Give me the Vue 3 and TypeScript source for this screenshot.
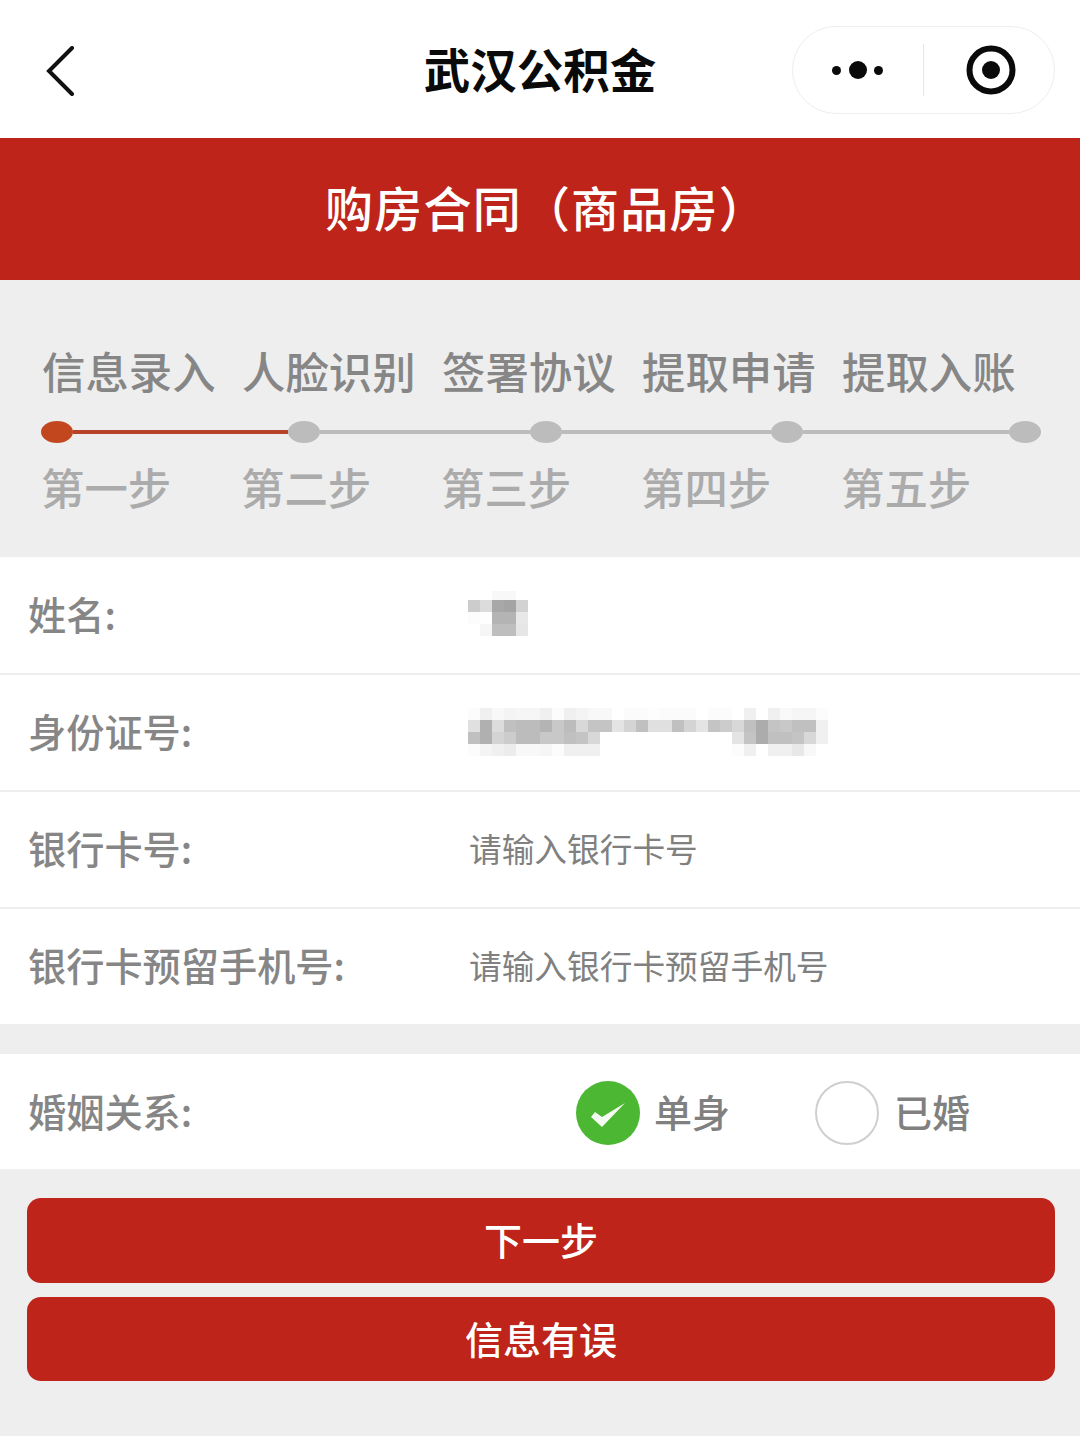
<script setup lang="ts">
const steps = [
  { name: '信息录入', no: '第一步' },
  { name: '人脸识别', no: '第二步' },
  { name: '签署协议', no: '第三步' },
  { name: '提取申请', no: '第四步' },
  { name: '提取入账', no: '第五步' },
];

// the gaps between the step dots are not quite even in the original
const segments = [215, 210, 209, 206];

// mosaic cells of the blurred-out values, grey level per 12px cell
const nameCells = [
  ['fff', 'fff', 'f8f8f8', 'f8f8f8', 'fff'],
  ['ccc', 'dcdcdc', 'a8a8a8', 'a4a4a4', 'd2d2d2'],
  ['fcfcfc', 'fefefe', 'b4b4b4', 'b4b4b4', 'e8e8e8'],
  ['fff', 'f6f6f6', 'bebebe', 'bebebe', 'e6e6e6'],
];
const idLevels = [
  'fc f0 f8 f4 f6 f6 f0 fc f0 f4 f8 f8 ff fb fb fd fb fb fb ff fb fb ff f0 ff f0 f9 f6 f6 fc',
  'e0 b0 dc c0 bc bc b4 c8 bc d8 c4 c4 e4 d4 c0 e0 e0 c0 d4 e4 c4 cc d8 c0 ac c4 c8 c0 c0 f0',
  'c0 b0 d4 cc bc bc c8 c8 c0 c4 d8 ff ff ff ff ff ff ff ff ff ff ff e4 c4 ac c0 c0 c4 d8 f0',
  'fc f4 f0 ec f8 f8 f6 fc f0 f0 f0 ff ff ff ff ff ff ff ff ff ff ff fc f0 ff f0 f0 e8 f8 ff',
];
const idCells = idLevels.map((row) => row.split(' ').map((v) => v + v + v));

const fields = [
  { label: '姓名:', cells: nameCells },
  { label: '身份证号:', cells: idCells },
  { label: '银行卡号:', placeholder: '请输入银行卡号' },
  { label: '银行卡预留手机号:', placeholder: '请输入银行卡预留手机号' },
];
</script>

<template>
  <div class="page">
    <nav class="nav">
      <svg class="back" width="30" height="50" viewBox="0 0 30 50">
        <path d="M26 2 L3 25 L26 48" fill="none" stroke="#111" stroke-width="4" stroke-linecap="round" stroke-linejoin="miter" />
      </svg>
      <h1 class="nav-title">武汉公积金</h1>
      <div class="capsule">
        <div class="dots"><i></i><i class="big"></i><i></i></div>
        <span class="sep"></span>
        <svg width="50" height="50" viewBox="0 0 50 50" class="target">
          <circle cx="25" cy="25" r="21.5" fill="none" stroke="#0a0a0a" stroke-width="6" />
          <circle cx="25" cy="25" r="9" fill="#0a0a0a" />
        </svg>
      </div>
    </nav>

    <header class="banner">购房合同（商品房）</header>

    <section class="steps">
      <div class="step-row names">
        <span v-for="s in steps" :key="s.name">{{ s.name }}</span>
      </div>
      <div class="track">
        <template v-for="(w, i) in segments" :key="i">
          <i class="dot" :class="{ on: i === 0 }"></i>
          <i class="line" :class="{ on: i === 0 }" :style="{ width: w + 'px' }"></i>
        </template>
        <i class="dot"></i>
      </div>
      <div class="step-row nums">
        <span v-for="s in steps" :key="s.no">{{ s.no }}</span>
      </div>
    </section>

    <section class="form">
      <div v-for="f in fields" :key="f.label" class="row">
        <label class="label">{{ f.label }}</label>
        <div v-if="f.cells" class="mosaic" :class="{ short: f.cells === nameCells }">
          <div v-for="(cells, i) in f.cells" :key="i" class="mosaic-row">
            <i v-for="(c, j) in cells" :key="j" :style="{ background: '#' + c }"></i>
          </div>
        </div>
        <span v-else class="placeholder">{{ f.placeholder }}</span>
      </div>
    </section>

    <section class="marriage">
      <span class="label">婚姻关系:</span>
      <div class="radio first">
        <svg width="64" height="64" viewBox="0 0 64 64">
          <circle cx="32" cy="32" r="32" fill="#4cb733" />
          <path d="M19 31 L15 36 L26 46 L49 22 L26 36 Z" fill="#f4fbf2" />
        </svg>
        <span>单身</span>
      </div>
      <div class="radio second">
        <svg width="64" height="64" viewBox="0 0 64 64">
          <circle cx="32" cy="32" r="31" fill="#fff" stroke="#cfcfcf" stroke-width="2" />
        </svg>
        <span>已婚</span>
      </div>
    </section>

    <div class="actions">
      <button class="btn one">下一步</button>
      <button class="btn two">信息有误</button>
    </div>
  </div>
</template>

<style scoped>
.page {
  min-height: 1436px;
  background: #eeeeee;
  font-family: "Noto Sans CJK SC", "Noto Sans", sans-serif;
  overflow: hidden;
}

/* nav bar */
.nav {
  height: 138px;
  background: #fff;
  display: flex;
  align-items: flex-start;
  box-sizing: border-box;
  padding: 26px 25px 0 46px;
}
.back {
  flex: none;
  margin-top: 20px;
}
.nav-title {
  flex: 1;
  margin: 0;
  padding-left: 212px;
  text-align: center;
  font-size: 46.5px;
  line-height: 84px;
  font-weight: 700;
  color: #0a0a0a;
}
.capsule {
  flex: none;
  width: 263px;
  height: 88px;
  box-sizing: border-box;
  border: 1.5px solid #eeeeee;
  border-radius: 44px;
  display: flex;
  align-items: center;
  padding-left: 39px;
}
.dots {
  display: flex;
  align-items: center;
  gap: 7.5px;
  width: 54px;
}
.dots i {
  width: 9px;
  height: 9px;
  border-radius: 50%;
  background: #0a0a0a;
}
.dots i.big {
  width: 18px;
  height: 18px;
}
.sep {
  width: 1px;
  height: 52px;
  background: #e6e6e6;
  margin-left: 37px;
}
.target {
  margin-left: 42px;
}

.banner {
  height: 142px;
  box-sizing: border-box;
  padding-left: 13px;
  background: #be241a;
  color: #fff;
  text-align: center;
  font-size: 48px;
  letter-spacing: 1.2px;
  font-weight: 500;
  line-height: 136px;
}

/* steps */
.steps {
  height: 277px;
  box-sizing: border-box;
  padding-top: 59px;
}
.step-row {
  display: flex;
  padding-left: 42px;
}
.step-row span {
  width: 200px;
  flex: none;
  font-size: 43.4px;
  font-weight: 500;
  line-height: 62px;
  white-space: nowrap;
}
.names {
  color: #868686;
}
.nums {
  color: #ababab;
  margin-top: 12px;
  padding-left: 41px;
}
.track {
  display: flex;
  align-items: center;
  height: 22px;
  margin-top: 20px;
  padding-left: 41px;
}
.dot {
  flex: none;
  width: 32px;
  height: 22px;
  border-radius: 50%;
  background: #bcbcbc;
}
.dot.on {
  background: #c2471f;
}
.line {
  flex: none;
  height: 4px;
  background: #bcbcbc;
}
.line.on {
  background: #b8432a;
}

/* form */
.form {
  background: #fff;
}
.row {
  height: 117px;
  box-sizing: border-box;
  border-bottom: 2px solid #eeeeee;
  display: flex;
  align-items: center;
  padding: 0 0 4px 28px;
}
.row:first-child {
  height: 118px;
}
.row:last-child {
  border-bottom: 0;
  height: 115px;
}
.label {
  width: 440px;
  flex: none;
  font-size: 38.2px;
  font-weight: 500;
  color: #868686;
}
.placeholder {
  margin-left: 1px;
  font-size: 32.7px;
  color: #808080;
  white-space: nowrap;
}
.mosaic {
  margin-top: 3px;
}
.mosaic.short {
  margin-top: 1px;
}
.mosaic.short .mosaic-row:first-child i {
  height: 9px;
}
.mosaic-row {
  display: flex;
}
.mosaic-row i {
  width: 12px;
  height: 12px;
  flex: none;
}

.marriage {
  margin-top: 30px;
  height: 115px;
  box-sizing: border-box;
  background: #fff;
  display: flex;
  align-items: center;
  padding: 0 0 3px 28px;
}
.marriage .label {
  width: 548px;
}
.radio {
  display: flex;
  align-items: center;
  gap: 14px;
  font-size: 38px;
  font-weight: 500;
  color: #808080;
}
.radio svg {
  flex: none;
  margin-top: 6px;
}
.radio.first {
  width: 239px;
}
.radio.second {
  gap: 15px;
}

.actions {
  padding: 29px 25px 0 27px;
  display: flex;
  flex-direction: column;
  gap: 14px;
}
.btn {
  border: 0;
  border-radius: 14px;
  background: #be241a;
  color: #fff;
  font-family: inherit;
  font-size: 38px;
  font-weight: 500;
  padding: 0 0 4px;
}
.btn.one {
  height: 85px;
}
.btn.two {
  height: 84px;
}
</style>
